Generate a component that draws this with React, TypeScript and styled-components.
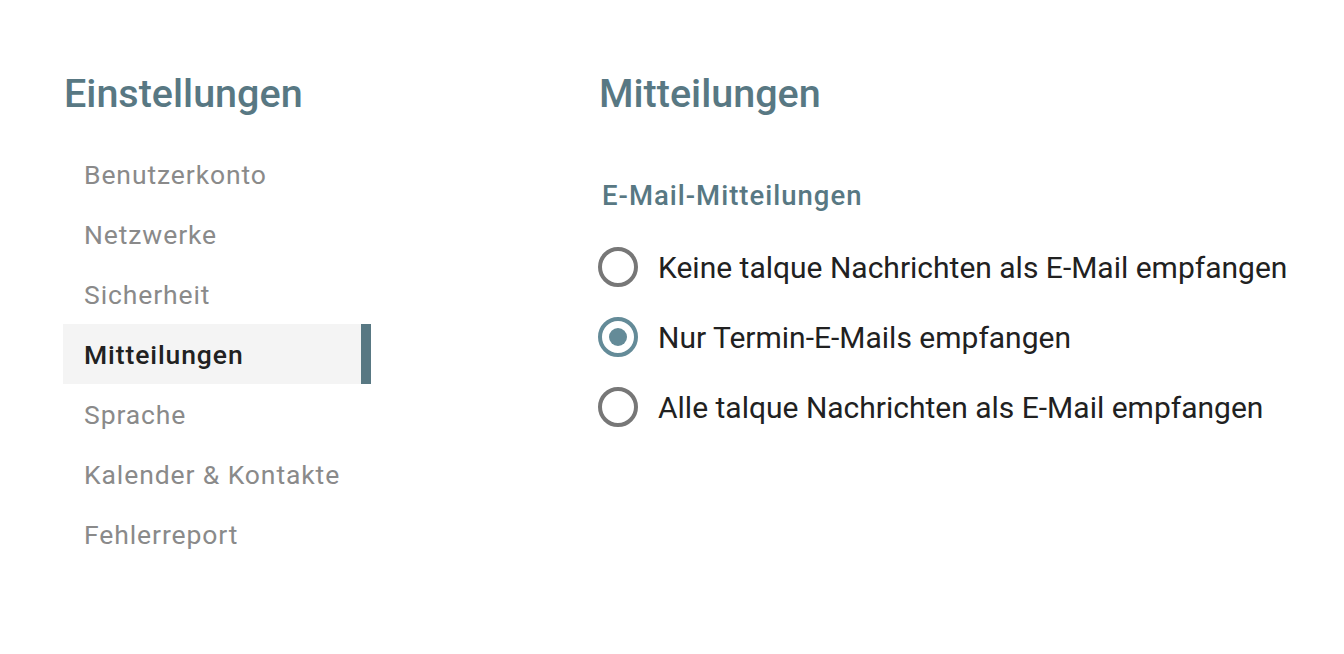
import React, { useState } from 'react'
import styled, { createGlobalStyle } from 'styled-components'

const GlobalStyle = createGlobalStyle`
  body {
    margin: 0;
    background: #ffffff;
    font-family: Roboto, 'Noto Sans', sans-serif;
  }
`

const Page = styled.div`
  display: flex;
  padding: 70px 0 0 63px;
  height: 654px;
  box-sizing: border-box;
`

const Sidebar = styled.nav`
  width: 308px;
  flex-shrink: 0;
`

const Title = styled.h1`
  margin: 0 0 0 1px;
  font-size: 39.5px;
  line-height: 48px;
  font-weight: 500;
  color: #587883;
`

const NavList = styled.ul`
  list-style: none;
  margin: 26px 0 0;
  padding: 0;
`

const NavItem = styled.li<{ $active?: boolean }>`
  height: 60px;
  display: flex;
  align-items: center;
  padding-left: 21px;
  font-size: 26.5px;
  letter-spacing: 0.9px;
  font-weight: ${(p) => (p.$active ? 500 : 400)};
  color: ${(p) => (p.$active ? '#212121' : '#8a8a8a')};
  background: ${(p) => (p.$active ? '#f4f4f4' : 'transparent')};
  border-right: 10px solid ${(p) => (p.$active ? '#587883' : 'transparent')};
  cursor: pointer;
`

const Content = styled.main`
  margin-left: 227px;
`

const SectionTitle = styled.h2`
  margin: 60px 0 0 4px;
  font-size: 27.5px;
  letter-spacing: 1px;
  line-height: 36px;
  font-weight: 500;
  color: #587883;
`

const Options = styled.div`
  margin-top: 18px;
  display: flex;
  flex-direction: column;
`

const Option = styled.label`
  display: flex;
  align-items: center;
  height: 70px;
  gap: 20px;
  font-size: 30px;
  color: #212121;
  cursor: pointer;
`

const Radio = styled.span<{ $checked?: boolean }>`
  width: 40px;
  height: 40px;
  flex-shrink: 0;
  box-sizing: border-box;
  border-radius: 50%;
  border: 4px solid ${(p) => (p.$checked ? '#648b98' : '#777777')};
  display: flex;
  align-items: center;
  justify-content: center;

  &::after {
    content: '';
    width: 18px;
    height: 18px;
    border-radius: 50%;
    background: #648b98;
    display: ${(p) => (p.$checked ? 'block' : 'none')};
  }
`

const navItems = [
  'Benutzerkonto',
  'Netzwerke',
  'Sicherheit',
  'Mitteilungen',
  'Sprache',
  'Kalender & Kontakte',
  'Fehlerreport',
]

const options = [
  'Keine talque Nachrichten als E-Mail empfangen',
  'Nur Termin-E-Mails empfangen',
  'Alle talque Nachrichten als E-Mail empfangen',
]

export default function App() {
  const [selected, setSelected] = useState(1)

  return (
    <>
      <GlobalStyle />
      <Page>
        <Sidebar>
          <Title>Einstellungen</Title>
          <NavList>
            {navItems.map((item) => (
              <NavItem key={item} $active={item === 'Mitteilungen'}>
                {item}
              </NavItem>
            ))}
          </NavList>
        </Sidebar>
        <Content>
          <Title>Mitteilungen</Title>
          <SectionTitle>E-Mail-Mitteilungen</SectionTitle>
          <Options>
            {options.map((opt, i) => (
              <Option key={opt} onClick={() => setSelected(i)}>
                <Radio $checked={selected === i} />
                {opt}
              </Option>
            ))}
          </Options>
        </Content>
      </Page>
    </>
  )
}
